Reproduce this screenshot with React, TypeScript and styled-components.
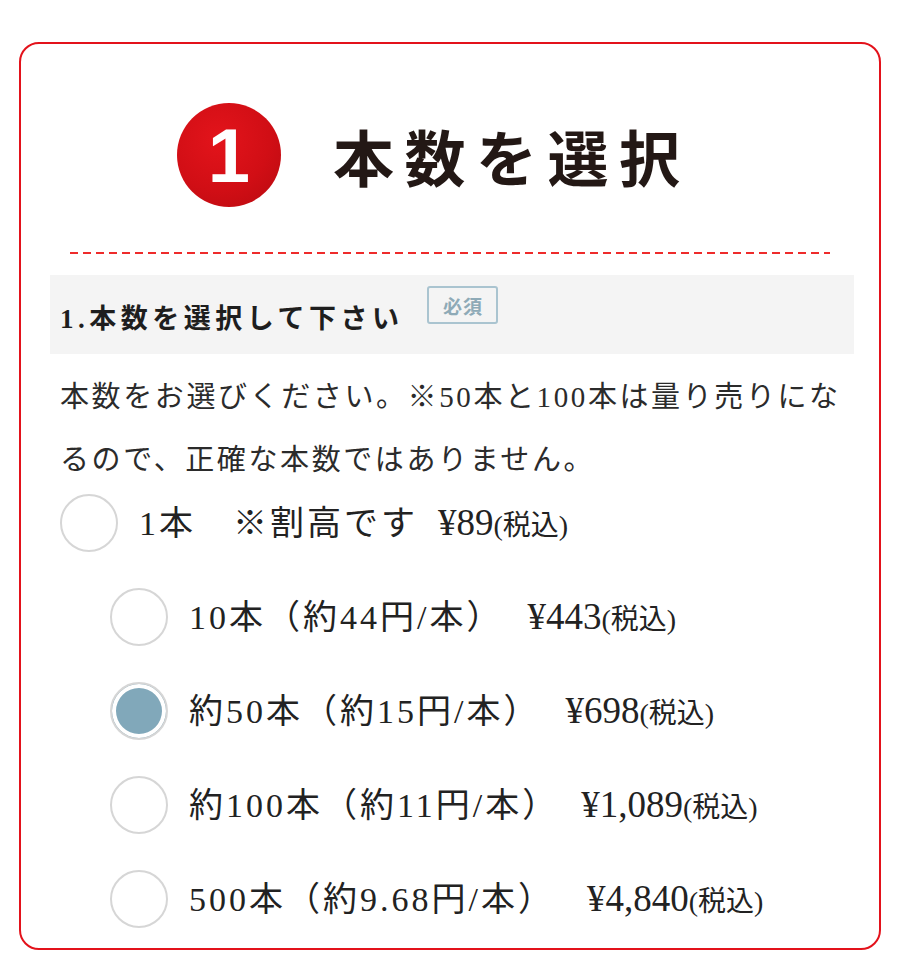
import React, { useState } from "react";
import styled, { createGlobalStyle } from "styled-components";

const GlobalStyle = createGlobalStyle`
  html, body {
    margin: 0;
    padding: 0;
    background: #ffffff;
  }
  body {
    font-family: "Liberation Serif", "Noto Sans CJK JP", serif;
    color: #222;
  }
`;

const Page = styled.div`
  padding: 42px 20px 25px 19px;
`;

const Card = styled.section`
  border: 2px solid #e3121b;
  border-radius: 20px;
  background: #fff;
  padding: 59px 0 20px;
`;

const Heading = styled.div`
  display: flex;
  align-items: center;
  padding-left: 156px;
  height: 104px;
`;

const StepBadge = styled.div`
  width: 104px;
  height: 104px;
  border-radius: 50%;
  flex-shrink: 0;
  background: radial-gradient(circle at 40% 35%, #e3141b 0%, #d10e15 55%, #b70a10 100%);
  color: #fff;
  font-family: "Liberation Sans", Arial, sans-serif;
  font-weight: 700;
  font-size: 76px;
  line-height: 1;
  display: flex;
  align-items: center;
  justify-content: center;
  padding-top: 2px;
  box-sizing: border-box;
`;

const HeadingText = styled.h1`
  margin: 0 0 0 52px;
  font-family: "Noto Sans CJK JP", sans-serif;
  font-weight: 700;
  font-size: 61px;
  letter-spacing: 10.5px;
  color: #231815;
  line-height: 1;
`;

const Dashed = styled.div`
  height: 2px;
  margin: 45px 49px 21px;
  background: repeating-linear-gradient(90deg, #ee2b2b 0 8px, transparent 8px 13px);
`;

const Content = styled.div`
  margin: 0 25px 0 29px;
`;

const FieldHead = styled.div`
  display: flex;
  align-items: flex-start;
  background: #f4f4f4;
  padding: 11px 10px 15px;
`;

const FieldTitle = styled.h2`
  margin: 13px 0 0;
  font-family: "Liberation Serif", "Noto Sans CJK JP", serif;
  font-weight: 700;
  font-size: 27px;
  letter-spacing: 4.5px;
  line-height: 40px;
  color: #1e1e1e;
`;

const Required = styled.span`
  margin-left: 24px;
  border: 2px solid #aac4d0;
  border-radius: 3px;
  width: 71px;
  height: 38px;
  box-sizing: border-box;
  display: flex;
  align-items: center;
  justify-content: center;
  font-family: "Noto Sans CJK JP", sans-serif;
  font-weight: 700;
  font-size: 19px;
  color: #8eaab7;
  letter-spacing: 1px;
`;

const Description = styled.p`
  margin: 12px 0 0;
  padding: 0 0 0 10px;
  font-size: 29px;
  letter-spacing: 2.6px;
  line-height: 63px;
  color: #2b2b2b;
`;

const OptionList = styled.div`
  display: flex;
  flex-direction: column;
  gap: 36px;
  margin-top: 2px;
`;

const Option = styled.label<{ $indent: number }>`
  display: flex;
  align-items: center;
  padding-left: ${(p) => p.$indent}px;
  cursor: pointer;
  height: 58px;

  input {
    position: absolute;
    opacity: 0;
    pointer-events: none;
  }
`;

const Circle = styled.span<{ $checked: boolean }>`
  width: 58px;
  height: 58px;
  border-radius: 50%;
  border: 2px solid #d6d6d6;
  box-sizing: border-box;
  flex-shrink: 0;
  background: ${(p) => (p.$checked ? "#81a8ba" : "#fff")};
  box-shadow: ${(p) => (p.$checked ? "inset 0 0 0 4px #fff" : "none")};
`;

const OptionText = styled.span`
  display: flex;
  align-items: baseline;
  margin-left: 21px;
  margin-top: -6px;
`;

const Label = styled.span`
  font-size: 34px;
  letter-spacing: 3px;
  color: #222;
  white-space: pre;
`;

const Price = styled.span<{ $gap: number }>`
  margin-left: ${(p) => p.$gap}px;
  font-size: 37px;
  color: #222;
  white-space: nowrap;
`;

const Tax = styled.span`
  font-size: 28px;
`;

const options = [
  { label: "1本　※割高です", price: "¥89", indent: 10, gap: 20 },
  { label: "10本（約44円/本）", price: "¥443", indent: 60, gap: 24 },
  { label: "約50本（約15円/本）", price: "¥698", indent: 60, gap: 25 },
  { label: "約100本（約11円/本）", price: "¥1,089", indent: 60, gap: 22 },
  { label: "500本（約9.68円/本）", price: "¥4,840", indent: 60, gap: 32 },
];

export default function App() {
  const [selected, setSelected] = useState(2);

  return (
    <>
      <GlobalStyle />
      <Page>
        <Card>
          <Heading>
            <StepBadge>1</StepBadge>
            <HeadingText>本数を選択</HeadingText>
          </Heading>
          <Dashed />
          <Content>
            <FieldHead>
              <FieldTitle>1.本数を選択して下さい</FieldTitle>
              <Required>必須</Required>
            </FieldHead>
            <Description>
              本数をお選びください。※50本と100本は量り売りにな
              <br />
              るので、正確な本数ではありません。
            </Description>
            <OptionList>
              {options.map((o, i) => (
                <Option key={o.label} $indent={o.indent}>
                  <input
                    type="radio"
                    name="count"
                    checked={selected === i}
                    onChange={() => setSelected(i)}
                  />
                  <Circle $checked={selected === i} />
                  <OptionText>
                    <Label>{o.label}</Label>
                    <Price $gap={o.gap}>
                      {o.price}
                      <Tax>(税込)</Tax>
                    </Price>
                  </OptionText>
                </Option>
              ))}
            </OptionList>
          </Content>
        </Card>
      </Page>
    </>
  );
}
